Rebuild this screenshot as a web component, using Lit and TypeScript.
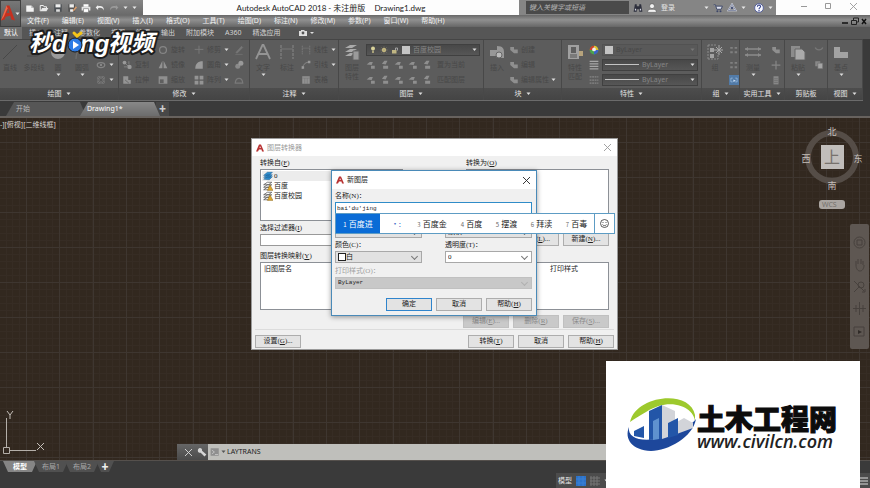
import { LitElement, html, svg, css, nothing } from "lit";
import { customElement, property } from "lit/decorators.js";
import { classMap } from "lit/directives/class-map.js";

/* Icon drawings, all on a 16 x 16 board. */
const icons: Record<string, unknown> = {
  page: svg`<path d="M2 4h8l4 4v6H2z" fill="#f4f4f4"/><path d="M10 4v4h4" fill="#bbb"/>`,
  open: svg`<path d="M2 13V4h5l1 2h4v2" fill="none" stroke="#eee" stroke-width="1.6"/><path d="M2 13l3-5h10l-3 5z" fill="#e8e8e8"/>`,
  save: svg`<path d="M2 2h12v12H2z" fill="#4c5055"/><path d="M4 2h8v5H4z" fill="#f0f0f0"/><path d="M5 10h6v4H5z" fill="#ddd"/>`,
  saveas: svg`<path d="M2 2h11v12H2z" fill="#565656"/><path d="M4 2h7v5H4zM5 10h5v4H5z" fill="#eee"/><path d="M9 12l5-7 2 2-5 6z" fill="#d79a6a"/>`,
  print: svg`<path d="M4 2h8v4H4z" fill="#fff"/><path d="M1 6h14v6H1z" fill="#e4e4e4"/><path d="M4 9h8v6H4z" fill="#fff" stroke="#777"/>`,
  undo: svg`<path d="M5 3L1 7l4 4V8c5-1 8 0 9 4 1-6-4-8-9-7z" fill="#eee"/>`,
  redo: svg`<path d="M11 3l4 4-4 4V8C6 7 3 8 2 12 1 6 6 4 11 5z" fill="#9a9a9a"/>`,
  binoc: svg`<path d="M3 2h3v3h4V2h3l2 12h-5v-4H6v4H1z" fill="#2d2f3c"/><path d="M3 9h2v3H3zM11 9h2v3h-2z" fill="#d5d8e4"/>`,
  user: svg`<circle cx="8" cy="5" r="4" fill="#f2f2f2" stroke="#555"/><path d="M1 15c0-5 3-5 7-5s7 0 7 5z" fill="#f2f2f2" stroke="#555"/>`,
  cart: svg`<path d="M1 3h3l2 7h7l2-5H5" fill="#dfe3f0" stroke="#3c4668" stroke-width="1.5"/><circle cx="7" cy="13" r="1.6" fill="#3c4668"/><circle cx="12" cy="13" r="1.6" fill="#3c4668"/>`,
  tri: svg`<path d="M8 2l6 10H2z" fill="none" stroke="#e8ecf8" stroke-width="2.4"/><path d="M8 2l6 10H2z" fill="none" stroke="#4b5577" stroke-width="1"/><circle cx="8" cy="8" r="2" fill="#4b5577"/>`,
  help: svg`<circle cx="8" cy="8" r="7" fill="#f7f8ff" stroke="#54609a" stroke-width="1.5"/><path d="M5.500 6c0-4 5.500-3 5 0-.3 1.500-2.500 1.500-2.500 4" fill="none" stroke="#35438b" stroke-width="1.8"/><circle cx="8" cy="12.300" r="1.200" fill="#35438b"/>`,
  line: svg`<path d="M1 15L15 1" stroke="#484848" stroke-width="1"/>`,
  pline: svg`<path d="M1 12h9c5 0 5-8 0-8" fill="none" stroke="#4a4a4a"/>`,
  circle: svg`<circle cx="8" cy="8" r="7" fill="#9b9b9b"/>`,
  arc: svg`<path d="M2 15C2 6 7 2 14 2" fill="none" stroke="#6f6f6f" stroke-width="1.200"/>`,
  rect: svg`<path d="M2 4h12v8H2z" fill="none" stroke="#777"/>`,
  ellipse: svg`<ellipse cx="8" cy="8" rx="6" ry="4" fill="none" stroke="#858585" stroke-width="2"/><circle cx="8" cy="8" r="1.500" fill="#999"/>`,
  hatch: svg`<path d="M2 2h12v12H2z" fill="#777"/><path d="M2 2l12 12M14 2L2 14M8 2v12M2 8h12" stroke="#555"/>`,
  move: svg`<path d="M8 1v14M1 8h14" stroke="#858585" stroke-width="2"/>`,
  rotate: svg`<circle cx="8" cy="8" r="5.500" fill="none" stroke="#858585" stroke-width="2"/>`,
  trim: svg`<path d="M1 7h14M8 1v13" stroke="#7a7a7a" stroke-width="1.500"/>`,
  pencil: svg`<path d="M3 12L12 2l2 2L5 13zM2 15h12" fill="#777" stroke="#777"/>`,
  copy: svg`<circle cx="4" cy="4" r="3" fill="#999"/><circle cx="12" cy="11" r="3.500" fill="#999"/><path d="M4 4l8 8M3 11h5M11 2v5" stroke="#999"/>`,
  mirror: svg`<path d="M7 1v12H1zM9 1v12h6z" fill="#929292"/>`,
  fillet: svg`<path d="M2 14C2 6 6 2 14 2v12z" fill="#9a9a9a"/>`,
  blob: svg`<circle cx="6" cy="10" r="4" fill="#8a8a8a"/><circle cx="11" cy="5" r="4" fill="#999"/>`,
  stretch: svg`<path d="M2 2h8v6h4v6H2z" fill="#949494"/><path d="M5 8l6 5" stroke="#555"/>`,
  scale: svg`<path d="M1 2h14v12H1z" fill="#8f8f8f"/><path d="M3 7h6v6H3z" fill="#5f5f5f"/>`,
  array: svg`<path d="M1 1h6v6H1zM9 1h6v6H9zM1 9h6v6H1zM9 9h6v6H9z" fill="#949494"/>`,
  offset: svg`<path d="M2 13C3 3 13 3 14 13z" fill="none" stroke="#7a7a7a" stroke-width="2"/>`,
  bigA: svg`<path d="M1 15L7.500 1h1L15 15M4 10h8" fill="none" stroke="#949494" stroke-width="1.800"/>`,
  dim: svg`<path d="M2 1v14M14 1v14" stroke="#888" stroke-dasharray="3 1"/><path d="M2 5h12" stroke="#777"/>`,
  leader: svg`<path d="M2 14C4 5 8 4 14 3" fill="none" stroke="#888" stroke-width="1.600"/><path d="M1 10h4v4H1zM11 1h4v4h-4z" fill="#999"/>`,
  table: svg`<path d="M2 2h12v12H2z" fill="#929292"/><path d="M2 5h12M6 5v9M10 5v9" stroke="#777"/>`,
  layers: svg`<path d="M1 4l5-3h7l-5 3zM1 8l5-3h7l-5 3zM1 12l5-3h4l-3 3z" fill="#aaa"/><path d="M9 7h6v9H9z" fill="#9a9a9a" stroke="#666"/>`,
  lay1: svg`<path d="M1 7l5-4h5l-2 5zM8 9h6v5H8z" fill="#8f8f8f"/>`,
  lay2: svg`<path d="M3 6l4-5h5l-3 6zM5 9h8v5H5z" fill="#8f8f8f"/>`,
  insert: svg`<path d="M1 6h7V2c6 0 7 3 7 6v6H9v-2H1z" fill="#979797"/><circle cx="10" cy="11" r="3" fill="#bbb" stroke="#666"/>`,
  block: svg`<path d="M2 3h6v4h6v6H8L2 8z" fill="#8f8f8f"/>`,
  match: svg`<path d="M1 1h11v14H1z" fill="#a0a0a0"/><path d="M4 3h5v6H4z" fill="#5f5f5f"/><path d="M3 11h7M3 13h7" stroke="#555"/><path d="M12 7h4v5h-4z" fill="#b6a37c"/>`,
  wheel: svg`<circle cx="8" cy="8" r="7" fill="#4aa34c"/><path d="M8 8V1a7 7 0 0 1 7 7z" fill="#e0c030"/><path d="M8 8H1a7 7 0 0 1 7-7z" fill="#d0402c"/><path d="M8 8v7a7 7 0 0 0 7-7z" fill="#3b62c8"/><circle cx="8" cy="7" r="3" fill="#eee"/>`,
  weights: svg`<path d="M1 2h14M1 6h14M1 10h14M1 14h14" stroke="#a6a6a6" stroke-width="2"/>`,
  types: svg`<path d="M1 3h14M1 8h14M1 13h14" stroke="#858585" stroke-width="2" stroke-dasharray="3 1"/>`,
  group: svg`<path d="M1 1h9M1 15h10V9M1 1v14" stroke="#8b8b8b" fill="none" stroke-dasharray="2 1"/><path d="M3 4h4v4H3zM3 10h4v4H3z" fill="#a2a2a2"/><path d="M12 1v10M7 6h9M9 3l6 6M15 3L9 9" stroke="#a8a8a8"/>`,
  dots: svg`<path d="M2 3h4v3H2zM9 3h4v3H9zM2 10h4v3H2zM9 10h4v3H9z" fill="#808080"/>`,
  sel: svg`<path d="M0 0h16v16H0z" fill="#527ba8"/><path d="M3 5h3M3 5v6h3M13 5h-3M13 5v6h-3" stroke="#a9c8ea" fill="none"/><path d="M7 7l4 2-4 2z" fill="#cfe2f7"/>`,
  measure: svg`<path d="M0 5h16M0 11h16" stroke="#8b8b8b" stroke-width="1.500"/><path d="M0 5l3-2v4zM16 5l-3-2v4zM0 11l3-2v4zM16 11l-3-2v4z" fill="#8b8b8b"/>`,
  calc: svg`<path d="M4 2h8v13H4z" fill="#888"/><path d="M5 6h6M5 9h6M5 12h6" stroke="#666"/>`,
  paste: svg`<path d="M1 2h9v11H1z" fill="#8c8c8c"/><path d="M5 5h7l3 3v8H5z" fill="#aaa" stroke="#666"/>`,
  cut: svg`<path d="M2 4c2 5 10 5 12 0" fill="none" stroke="#777" stroke-width="2"/>`,
  copies: svg`<path d="M2 2h8v8H2z" fill="#888"/><path d="M6 5h8v9H6z" fill="#a5a5a5" stroke="#666"/>`,
  base: svg`<path d="M1 3h6v5h8v6H1z" fill="#a2a2a2"/>`,
  bulb: svg`<circle cx="8" cy="5" r="4" fill="#d9d29a"/><path d="M6 9h4v5H6z" fill="#a9a27a"/>`,
  sun: svg`<circle cx="8" cy="8" r="4" fill="#e0cf88"/><path d="M8 1v14M1 8h14M3 3l10 10M13 3L3 13" stroke="#a8a078"/>`,
  lock: svg`<path d="M2 8h9v7H2z" fill="#c0b683"/><path d="M9 8V4h4v5" stroke="#bbb" fill="none" stroke-width="1.500"/>`,
  wrench: svg`<path d="M2 3c3-3 7 0 6 3l7 6-3 3-6-6C3 10 0 7 2 3l3 3z" fill="#d5d5d5"/>`,
  prompt: svg`<path d="M1 2h13v12H1z" fill="#8f8f8f"/><path d="M3 5l4 3-4 3M8 12h5" stroke="#ddd" fill="none"/>`,
  acad: svg`<path d="M0 15L6 1h4l6 14h-4l-1-4H6l-2 4z" fill="#b83232"/><path d="M7 8l1-4 2 4z" fill="#f7dede"/>`,
  layerBlue: svg`<path d="M1 7l6-5h8l-5 5zM1 10l6-4h8l-5 5zM1 13l6-4h8l-5 5z" fill="#2e8fd0" stroke="#1d5d90" stroke-width=".8"/>`,
  layerWarn: svg`<path d="M1 6l6-4h7l-5 4zM1 10l6-4h7l-5 4zM1 14l6-4h5l-3 4z" fill="#fff" stroke="#333"/><path d="M11 6l5 9H7z" fill="#e0a82c" stroke="#6a4c10" stroke-width=".6"/>`,
};

const icon = (name: string, size = 10) =>
  html`<svg width=${size} height=${size} viewBox="0 0 16 16" aria-hidden="true">${icons[name]}</svg>`;

const caret = html`<svg class="caret" width="5" height="4" viewBox="0 0 5 4" aria-hidden="true"><path d="M.5.500h4L2.500 3z" fill="currentColor"/></svg>`;
const cross = html`<svg width="7" height="7" viewBox="0 0 7 7" aria-hidden="true"><path d="M0 0l7 7M7 0L0 7" stroke="currentColor" stroke-width=".9"/></svg>`;

type Tool = { i: string; t?: string; more?: boolean };

const reset = css`
  * { box-sizing: border-box; }
  button, input, select {
    font: inherit; color: inherit; margin: 0; padding: 0;
    border: 0; border-radius: 0; background: none; appearance: none;
  }
  svg { display: block; flex: none; }
`;

@customElement("ribbon-bar")
class RibbonBar extends LitElement {
  static styles = [reset, css`
    :host { display: block; background: #3a3a3a; padding-right: 7px; }
    .panels {
      display: grid;
      grid-template-columns: 119fr 131fr 89fr 145fr 78fr 140fr 38fr 45fr 43fr 35fr;
      border-top: 1px solid #454545; border-bottom: 1px solid #6b6b6b;
    }
    .panel { display: flex; flex-direction: column; min-width: 0; border-right: 1px solid #484848; background: #5c5c5c; }
    .body { height: 48px; display: flex; gap: 4px; padding: 2px 3px 1px; color: #484848; }
    .name {
      height: 12px; display: flex; align-items: center; justify-content: center; gap: 4px;
      background: linear-gradient(#4d4d4d, #444); color: #e2e2e2; white-space: nowrap;
    }
    .big { display: flex; flex-direction: column; align-items: center; gap: 1px; width: 20px; flex: none; white-space: nowrap; line-height: 9px; }
    .big svg:first-child { margin: 2px 0; }
    .caret { color: #ddd; }
    .col { display: flex; flex-direction: column; flex: none; }
    .row { height: 15px; display: flex; align-items: center; gap: 3px; white-space: nowrap; }
    .row .caret { margin-left: 4px; }
    .end { margin-left: auto; }
    .icons { display: flex; gap: 4px; margin-right: 2px; }
    .draw .body { padding-left: 0; }
    .draw .row .caret { margin-left: 0; }
    .modify .body { gap: 9px; }
    .modify .row .caret { margin-left: 0; }
    .modify .col:last-child { margin-left: -4px; }
    .note .row .caret { margin-left: 0; }
    .block .body { gap: 2px; }
    .block .row { gap: 2px; }
    .block .row .caret { margin-left: 0; }
    .wide { flex: 1; min-width: 0; }
    .combo {
      flex: 1; height: 12px; display: flex; align-items: center; gap: 3px; padding: 0 2px;
      background: linear-gradient(#484848, #565656); border: 1px solid #404040; color: #858585;
    }
    .combo .caret { margin-left: auto; }
    .flat { background: #595959; border-color: #525252; color: #484848; }
    .flat .caret { color: #777; }
    .chip { width: 8px; height: 8px; background: #c4c4c4; }
    .rule { width: 34px; height: 1px; background: #c4c4c4; }
  `];

  big(tool: Tool, size = 16) {
    return html`<button class="big">${icon(tool.i, size)}<span>${tool.t}</span>${tool.more ? caret : nothing}</button>`;
  }

  col(tools: Tool[]) {
    return html`<div class="col">${tools.map((t) => html`
      <button class="row">${icon(t.i)}${t.t ? html`<span>${t.t}</span>` : nothing}${t.more ? caret : nothing}</button>`)}</div>`;
  }

  panel(cls: string, name: string, body: unknown, more = true) {
    return html`<section class="panel ${cls}"><div class="body">${body}</div>
      <div class="name"><span>${name}</span>${more ? caret : nothing}</div></section>`;
  }

  render() {
    return html`<div class="panels">
      ${this.panel("draw", "绘图", html`
        ${this.big({ i: "line", t: "直线" })}${this.big({ i: "pline", t: "多段线" })}
        ${this.big({ i: "circle", t: "圆", more: true })}${this.big({ i: "arc", t: "圆弧", more: true })}
        ${this.col([{ i: "rect", more: true }, { i: "ellipse", more: true }, { i: "hatch", more: true }])}`)}
      ${this.panel("modify", "修改", html`
        ${this.col([{ i: "move", t: "移动" }, { i: "copy", t: "复制" }, { i: "stretch", t: "拉伸" }])}
        ${this.col([{ i: "rotate", t: "旋转" }, { i: "mirror", t: "镜像" }, { i: "scale", t: "缩放" }])}
        ${this.col([{ i: "trim", t: "修剪", more: true }, { i: "fillet", t: "圆角", more: true }, { i: "array", t: "阵列", more: true }])}
        ${this.col([{ i: "pencil" }, { i: "blob" }, { i: "offset" }])}`)}
      ${this.panel("note", "注释", html`
        ${this.big({ i: "bigA", t: "文字", more: true })}${this.big({ i: "dim", t: "标注" })}
        ${this.col([{ i: "dim", t: "线性", more: true }, { i: "leader", t: "引线", more: true }, { i: "table", t: "表格" }])}`)}
      ${this.panel("layer", "图层", html`
        <button class="big">${icon("layers", 16)}<span>图层<br>特性</span></button>
        <div class="col wide">
          <div class="row"><button class="combo">${icon("bulb", 8)}${icon("sun", 8)}${icon("lock", 8)}<span class="chip"></span>百度校园${caret}</button></div>
          ${["置为当前", "匹配图层"].map((t) => html`
            <button class="row"><span class="icons">${["lay1", "lay2", "lay1", "lay1", "lay2"].map((n) => icon(n))}</span><span>${t}</span></button>`)}
        </div>`)}
      ${this.panel("block", "块", html`
        ${this.big({ i: "insert", t: "插入" })}
        ${this.col([{ i: "block", t: "创建" }, { i: "block", t: "编辑" }, { i: "block", t: "编辑属性", more: true }])}`)}
      ${this.panel("props", "特性", html`
        <button class="big">${icon("match", 16)}<span>特性<br>匹配</span></button>
        <div class="col wide">
          <div class="row">${icon("wheel")}<button class="combo flat"><span class="chip"></span>ByLayer${caret}</button></div>
          <div class="row">${icon("weights")}<button class="combo"><span class="rule"></span>ByLayer${caret}</button></div>
          <div class="row">${icon("types")}<button class="combo"><span class="rule"></span>ByLayer${caret}</button></div>
        </div>`)}
      ${this.panel("grp", "组", html`${this.big({ i: "group", t: "组" })}
        <span class="end">${this.col([{ i: "dots" }, { i: "dots" }, { i: "sel" }])}</span>`)}
      ${this.panel("util", "实用工具", html`${this.big({ i: "measure", t: "测量", more: true })}
        <span class="end">${this.col([{ i: "block" }, { i: "move" }, { i: "calc" }])}</span>`)}
      ${this.panel("clip", "剪贴板", html`${this.big({ i: "paste", t: "粘贴", more: true })}
        <span class="end">${this.col([{ i: "cut" }, { i: "copies" }])}</span>`, false)}
      ${this.panel("view", "视图", html`${this.big({ i: "base", t: "基点", more: true })}`)}
    </div>`;
  }
}

@customElement("acad-window")
class AcadWindow extends LitElement {
  @property() heading = "";
  @property({ type: Boolean, reflect: true }) active = false;

  static styles = [reset, css`
    :host { display: flex; flex-direction: column; background: #f0f0f0; border: 1px solid #9a9a9a; }
    :host([active]) { border-color: #4a8ab8; box-shadow: 0 1px 5px rgba(0, 0, 0, 0.4); }
    header { height: 17px; display: flex; align-items: center; gap: 3px; padding: 0 6px 0 4px; background: #fff; color: #999; }
    :host([active]) header { height: 18px; color: #222; }
    button { margin-left: auto; }
  `];

  render() {
    return html`<header>${icon("acad", 8)}<span>${this.heading}</span><button aria-label="关闭">${cross}</button></header><slot></slot>`;
  }
}

@customElement("layer-translator")
class LayerTranslator extends LitElement {
  static styles = [reset, css`
    :host { display: block; font-family: "Liberation Serif", "Noto Sans CJK SC", serif; font-size: 7px; line-height: 10px; color: #222; }
    .back { width: 367px; height: 212px; }
    .content { margin: 2px 3px 0; padding: 0 5px; border-bottom: 1px solid #dcdcdc; }
    .pair { display: flex; justify-content: space-between; }
    .side { width: 143px; display: flex; flex-direction: column; }
    .lab { display: block; height: 11px; white-space: nowrap; }
    .list { height: 52px; margin: 0; padding: 1px; list-style: none; background: #fff; border: 1px solid #8c9096; }
    .list li { display: flex; gap: 1px; align-items: center; height: 10px; padding-left: 1px; }
    .list .on { background: #ececec; }
    .filters { margin-top: 2px; }
    .filters .side + .side { flex-direction: row; align-items: flex-end; justify-content: flex-end; gap: 4px; }
    .edit { width: 100%; height: 12px; background: #fff; border: 1px solid #999; padding: 0 1px; }
    .map { margin-top: 5px; }
    table { width: 100%; height: 48px; background: #fff; border: 1px solid #8c9096; border-spacing: 0; }
    th { font-weight: 400; text-align: left; vertical-align: top; padding: 1px 3px; }
    .last { width: 61px; }
    .buttons { display: flex; justify-content: flex-end; gap: 4px; padding: 5px 0 1px; }
    .btn { width: 46px; height: 13px; background: #e3e3e3; border: 1px solid #adadad; text-align: center; line-height: 11px; white-space: nowrap; }
    .btn:disabled { background: #c9c9c9; border-color: #c0c0c0; color: #8a8a8a; }
    .foot { display: flex; gap: 4px; padding: 5px 3px 0; }
    .foot .btn:first-child { margin-right: auto; }
    .front { position: absolute; left: 80px; top: 32px; width: 206px; height: 146px; }
    .form { padding: 2px 4px 0 3px; display: flex; flex-direction: column; }
    .name { border-color: #2f8cc8; font-family: "Liberation Mono", monospace; font-size: 6px; line-height: 10px; }
    .grid { display: grid; grid-template-columns: 87px 87px; justify-content: space-between; }
    .hidden-row { margin-top: 12px; margin-bottom: 2px; }
    .box { display: grid; grid-template-columns: 1fr 9px; align-items: center; border: 1px solid #a8a8a8; background: #fff; height: 12px; }
    .box select { grid-area: 1 / 1 / 2 / 3; height: 10px; line-height: 10px; padding-left: 2px; min-width: 0; }
    .box::after { content: ""; grid-area: 1 / 2; width: 4px; height: 4px; margin-top: -2px; border: solid #777; border-width: 0 1px 1px 0; transform: rotate(45deg); pointer-events: none; }
    .gray { background: #e1e1e1; }
    .off { background: #c8c8c8; border-color: #c0c0c0; }
    .off::after { border-color: #b0b0b0; }
    .off select { font-family: "Liberation Mono", monospace; font-size: 6px; opacity: 1; }
    .mute { color: #a0a0a0; margin-top: 3px; }
    .swatch { display: grid; grid-template-columns: 9px 1fr 9px; }
    .swatch::before { content: ""; width: 6px; height: 6px; margin-left: 2px; background: #fff; border: 1px solid #222; }
    .swatch select { grid-area: 1 / 2 / 2 / 4; padding-left: 1px; }
    .swatch::after { grid-area: 1 / 3; }
    .confirm { display: flex; justify-content: flex-end; gap: 4px; padding-top: 9px; }
    .ok { outline: 1px solid #2f84cc; outline-offset: -1px; }
    .ime {
      position: absolute; left: 84px; top: 75px; width: 280px; height: 21px; display: flex;
      background: #fff; border: 1px solid #5d9cc4; font-family: "Noto Sans CJK SC", sans-serif; font-size: 8px; line-height: 19px;
    }
    .cand { flex: 0 0 35px; text-align: center; white-space: nowrap; }
    .cand small { font-size: 6px; color: #666; margin-right: 2px; }
    .picked { background: #0a6cd6; color: #fff; flex-basis: 44px; }
    .picked small { color: #fff; }
    .sign { color: #3c68c8; flex-basis: 30px; }
    .three { flex-basis: 44px; }
    .face { flex: 1; border-left: 1px solid #5d9cc4; display: grid; place-items: center; }
  `];

  render() {
    return html`
      <acad-window class="back" heading="图层转换器">
        <div class="content">
          <div class="pair">
            <div class="side"><span class="lab" id="from">转换自(<u>F</u>)</span>
              <ul class="list" aria-labelledby="from">
                <li class="on">${icon("layerBlue")}0</li><li>${icon("layerWarn")}百度</li><li>${icon("layerWarn")}百度校园</li>
              </ul></div>
            <div class="side"><span class="lab" id="to">转换为(<u>O</u>)</span><ul class="list" aria-labelledby="to"></ul></div>
          </div>
          <div class="pair filters">
            <div class="side"><label class="lab" for="filter">选择过滤器(<u>I</u>)</label><input class="edit" id="filter"></div>
            <div class="side"><button class="btn">加载(<u>L</u>)...</button><button class="btn">新建(<u>N</u>)...</button></div>
          </div>
          <div class="map"><span class="lab">图层转换映射(<u>Y</u>)</span>
            <table><tr><th>旧图层名</th><th class="last">打印样式</th></tr></table></div>
          <div class="buttons">
            <button class="btn" disabled>编辑(<u>E</u>)...</button><button class="btn" disabled>删除(<u>R</u>)</button><button class="btn" disabled>保存(<u>S</u>)...</button>
          </div>
        </div>
        <div class="foot">
          <button class="btn">设置(<u>G</u>)...</button><button class="btn">转换(<u>T</u>)</button><button class="btn">取消</button><button class="btn">帮助(<u>H</u>)</button>
        </div>
      </acad-window>
      <acad-window class="front" heading="新图层" active>
        <div class="form">
          <label class="lab" for="name">名称(N)：</label>
          <input class="edit name" id="name" value="bai'du'jing">
          <div class="grid hidden-row">
            <div class="box gray"><select aria-label="线型"><option>Continuous</option></select></div>
            <div class="box gray"><select aria-label="线宽"><option>默认</option></select></div>
          </div>
          <div class="grid">
            <label class="lab" for="color">颜色(C)：</label><label class="lab" for="clear">透明度(T)：</label>
            <div class="box gray swatch"><select id="color"><option>白</option></select></div>
            <div class="box"><select id="clear"><option>0</option></select></div>
          </div>
          <label class="lab mute" for="style">打印样式(O)：</label>
          <div class="box off"><select id="style" disabled><option>ByLayer</option></select></div>
          <div class="confirm"><button class="btn ok">确定</button><button class="btn">取消</button><button class="btn">帮助(<u>H</u>)</button></div>
        </div>
      </acad-window>
      <div class="ime">
        ${[["1", "百度进"], ["", "·:"], ["3", "百度金"], ["4", "百度"], ["5", "摆渡"], ["6", "拜渎"], ["7", "百毒"]].map(([n, t]) => html`
          <span class=${classMap({ cand: true, picked: n === "1", sign: n === "", three: n === "3" })}><small>${n}</small>${t}</span>`)}
        <button class="face" aria-label="表情"><svg width="9" height="9" viewBox="0 0 9 9"><circle cx="4.500" cy="4.500" r="4" fill="none" stroke="#333" stroke-width=".8"/><path d="M3 3v1M6 3v1M2.500 5.500c1 1.500 3 1.500 4 0" fill="none" stroke="#333" stroke-width=".8"/></svg></button>
      </div>`;
  }
}

@customElement("app-root")
class AppRoot extends LitElement {
  static styles = [reset, css`
    :host {
      position: relative; display: flex; flex-direction: column; min-height: 100vh; overflow: hidden;
      font-family: "Noto Sans", "Noto Sans CJK SC", sans-serif; font-size: 7px; line-height: 10px; color: #e4e4e4; background: #3a3a3a;
    }
    .top { display: grid; grid-template-columns: 21px 1fr; }
    .logo { background: linear-gradient(#777, #585858); border: 1px solid #404040; display: flex; align-items: center; }
    .title { height: 15px; display: flex; background: #fdfdfd; }
    .quick { width: 122px; display: flex; align-items: center; gap: 4px; padding: 0 4px; background: linear-gradient(#858585, #6a6a6a); }
    .caret { color: #e8e8e8; }
    .caption { flex: 1; display: flex; justify-content: center; align-items: center; gap: 9px; color: #222; font-family: Lato, "Noto Sans CJK SC", sans-serif; font-size: 8px; white-space: nowrap; }
    .search { width: 257px; display: flex; align-items: center; gap: 4px; background: #858585; padding-right: 3px; }
    .search input { width: 103px; height: 13px; background: #4a4a4a; padding-left: 3px; font-style: italic; margin-left: 7px; }
    .search input::placeholder { color: #b5b5b5; opacity: 1; }
    .push { margin-left: auto; }
    .win { width: 94px; display: flex; align-items: center; justify-content: space-around; color: #999; padding: 0 4px 3px 16px; }
    .menu { height: 12px; display: flex; align-items: center; gap: 13px; padding-left: 6px; background: linear-gradient(#686868, #909090 40%, #666); color: #f2f2f2; }
    .menu button { white-space: nowrap; }
    .mdi { margin-left: auto; padding-right: 3px; }
    .tabs { height: 12px; display: flex; align-items: center; background: #565656; color: #d2d2d2; }
    .tabs button { height: 12px; padding: 0 4px; margin-right: 3px; white-space: nowrap; }
    .tabs .on { background: #6f6f6f; color: #fff; }
    .docs { height: 15px; display: flex; align-items: flex-end; padding-left: 6px; }
    .docs button { height: 14px; }
    .doc { width: 80px; background: #565656; clip-path: polygon(0 100%, 8px 0, calc(100% - 6px) 0, 100% 100%); text-align: left; padding-left: 10px; color: #bcbcbc; margin-right: -6px; }
    .doc.on { background: linear-gradient(#888, #6c6c6c); color: #fff; padding-left: 7px; }
    .plus { width: 13px; margin-left: 2px; background: #484848; color: #ccc; }
    .space {
      flex: 1 0 343px; position: relative; border-top: 2px solid #67625e; background-color: #32281f;
      background-image:
        linear-gradient(90deg, #3e3630 1px, transparent 1px), linear-gradient(90deg, #3e3630 1px, transparent 1px), linear-gradient(90deg, #3e3630 1px, transparent 1px),
        linear-gradient(#3e3630 1px, transparent 1px),
        linear-gradient(90deg, #362c24 1px, transparent 1px), linear-gradient(90deg, #362c24 1px, transparent 1px), linear-gradient(90deg, #362c24 1px, transparent 1px),
        linear-gradient(#362c24 1px, transparent 1px);
      background-size: 100px 35px, 100px 35px, 100px 35px, 35px 35px, 20px 7px, 20px 7px, 20px 7px, 7px 7px;
      background-position: 26px 0, 59px 0, 93px 0, 0 24px, 6px 0, 12px 0, 19px 0, 0 3px;
    }
    .vp { margin: 2px 0 0; white-space: nowrap; color: #d8d4d0; }
    .cube { position: absolute; right: 6px; top: 6px; }
    .nav { position: absolute; right: 1px; top: 106px; width: 19px; height: 125px; background: #5e5752; border-radius: 2px; display: flex; flex-direction: column; align-items: center; justify-content: space-around; padding: 8px 0; }
    .ucs { position: absolute; left: 2px; bottom: 4px; }
    .dialogs { position: absolute; left: 251px; top: 20px; }
    .cmd { position: absolute; left: 177px; right: 220px; bottom: 0; height: 16px; display: flex; }
    .grip { width: 31px; background: linear-gradient(#666, #4a4a4a); display: flex; align-items: center; justify-content: space-between; padding: 0 1px 0 8px; color: #ddd; }
    .cmd label { flex: 1; display: flex; align-items: center; gap: 1px; padding-left: 2px; background: #bfbfbb; color: #222; }
    .cmd input { flex: 1; }
    .cmd .caret { color: #555; }
    .bottom { height: 28px; display: flex; justify-content: space-between; border-top: 1px solid #55504c; }
    .sheets { display: flex; height: 11px; padding-left: 3px; }
    .sheets button { width: 34px; margin-right: -3px; background: #505050; color: #a8a8a8; clip-path: polygon(0 0, 100% 0, calc(100% - 5px) 100%, 5px 100%); }
    .sheets .on { background: #858585; color: #fff; font-weight: 700; }
    .sheets .add { width: 18px; color: #eee; }
    .status { align-self: flex-end; width: 314px; height: 15px; display: flex; align-items: center; gap: 4px; background: #4c4c4c; padding: 0 2px; }
    .card { position: absolute; right: 10px; bottom: 0; width: 254px; height: 127px; background: #fff; }
    .mark { position: absolute; left: 24px; top: 26px; }
    .stamp { font-family: "Noto Sans CJK SC", sans-serif; font-weight: 700; font-style: italic; font-size: 23px; fill: #fff; stroke: #1d1d1d; stroke-width: 4px; paint-order: stroke; stroke-linejoin: round; }
    .latin { font-family: "Liberation Sans", sans-serif; font-size: 24px; }
    .zh { font-family: "Noto Sans CJK SC", sans-serif; font-weight: 900; font-size: 28px; fill: #0c0c0c; stroke: #0c0c0c; stroke-width: 1px; }
    .url { font-family: "Open Sans", sans-serif; font-weight: 600; font-style: italic; font-size: 18px; fill: #222; }
    .dir { font-family: "Noto Sans CJK SC", sans-serif; font-size: 9px; fill: #c4bfb9; text-anchor: middle; }
    .top-face { font-family: "Noto Sans CJK SC", sans-serif; font-size: 16px; fill: #77726d; text-anchor: middle; }
    .wcs { font-size: 7px; fill: #75706b; }
  `];

  render() {
    const menus = ["文件(F)", "编辑(E)", "视图(V)", "插入(I)", "格式(O)", "工具(T)", "绘图(D)", "标注(N)", "修改(M)", "参数(P)", "窗口(W)", "帮助(H)"];
    const tabs = ["默认", "插入", "注释", "参数化", "视图", "管理", "输出", "附加模块", "A360", "精选应用"];
    return html`
      <div class="top">
        <button class="logo" aria-label="应用程序">
          <svg width="14" height="19" viewBox="0 0 15 19"><path d="M0 17L6 1h3l6 16-4-1-1-4-5 1-1 3z" fill="#c5301f"/><path d="M6 9l2-5 1 5z" fill="#6d5a56"/><path d="M0 17L6 1l1 3-4 9z" fill="#ec6a4c"/></svg>${caret}
        </button>
        <div>
          <div class="title">
            <div class="quick">${["page", "open", "save", "saveas", "print", "undo", "redo"].map((n) => icon(n))}${caret}${caret}</div>
            <div class="caption"><span>Autodesk AutoCAD 2018 - 未注册版</span><span>Drawing1.dwg</span></div>
            <div class="search">
              <input placeholder="键入关键字或短语" aria-label="键入关键字或短语">
              ${icon("binoc")}${icon("user")}<span>登录</span><span class="push"></span>${caret}${icon("cart")}${icon("tri")}${caret}<span></span>${icon("help")}${caret}
            </div>
            <div class="win">
              <svg width="6" height="6" viewBox="0 0 6 6"><path d="M0 3.500h6" stroke="#999"/></svg>
              <svg width="6" height="6" viewBox="0 0 6 6"><path d="M.5.5h5v5h-5z" fill="none" stroke="#999"/></svg>${cross}
            </div>
          </div>
          <nav class="menu">${menus.map((m) => html`<button>${m}</button>`)}
            <span class="mdi"><svg width="25" height="8" viewBox="0 0 25 8"><path d="M0 6h6" stroke="#111" stroke-width="1.500"/><path d="M9.500 3.500h5v4h-5zM11.500 3V1h5v4h-2" fill="none" stroke="#222"/><path d="M20 2l4 5M24 2l-4 5" stroke="#111" stroke-width="1.500"/></svg></span>
          </nav>
        </div>
      </div>
      <nav class="tabs">${tabs.map((t, i) => html`<button class=${classMap({ on: i === 0 })}>${t}</button>`)}
        <svg width="26" height="6" viewBox="0 0 26 6"><path d="M13 0h3l1 1h2v5h-8V1h2z" fill="#ddd"/><circle cx="15" cy="3" r="1.400" fill="#555"/><path d="M22 2h4l-2 2z" fill="#ddd"/></svg>
      </nav>
      <ribbon-bar></ribbon-bar>
      <nav class="docs"><button class="doc">开始</button><button class="doc on">Drawing1*</button><button class="plus">✚</button></nav>
      <main class="space">
        <p class="vp">-][俯视][二维线框]</p>
        <svg class="cube" width="64" height="90" viewBox="0 0 64 90">
          <circle cx="32" cy="33" r="24" fill="none" stroke="#554d47" stroke-width="6"/>
          <path d="M21 21h23v24H21z" fill="#c0bdba"/>
          <text class="top-face" x="32" y="39">上</text>
          <text class="dir" x="32" y="11">北</text><text class="dir" x="32" y="65">南</text>
          <text class="dir" x="6" y="38">西</text><text class="dir" x="58" y="38">东</text>
          <rect x="19" y="76" width="26" height="9" rx="3" fill="#aaa5a1"/><text class="wcs" x="22" y="83">WCS</text>
        </svg>
        <div class="nav">
          <svg width="13" height="13" viewBox="0 0 13 13"><circle cx="6.500" cy="6.500" r="5.500" fill="none" stroke="#47413d"/><path d="M4 4h5v5H4z" fill="none" stroke="#47413d"/></svg>
          <svg width="13" height="14" viewBox="0 0 13 14"><path d="M3 7V3M5 6V1M8 6V1M10 7V3M3 7c0 8 8 8 8 0" fill="none" stroke="#47413d"/></svg>
          <svg width="13" height="13" viewBox="0 0 13 13"><circle cx="8" cy="5" r="3" fill="none" stroke="#47413d"/><path d="M1 1l10 10M1 12l5-5M9 12h3V9" stroke="#47413d" fill="none"/></svg>
          <svg width="13" height="13" viewBox="0 0 13 13"><path d="M6.500 0v13M0 6.500h13M3 3v7M10 3v7" stroke="#47413d"/></svg>
          <svg width="13" height="13" viewBox="0 0 13 13"><path d="M1 3h10v9H1z" fill="none" stroke="#47413d"/><path d="M5 6l4 2-4 2z" fill="#302b28"/></svg>
        </div>
        <svg class="ucs" width="44" height="46" viewBox="0 0 44 46">
          <path d="M4.500 8v30M7 40.500h27M1.500 37.500h6v6h-6z" fill="none" stroke="#b4afa9"/>
          <path d="M5 1l3 4 3-4M8 5v4M35 33l7 7M42 33l-7 7" fill="none" stroke="#c4bfb9"/>
        </svg>
        <div class="cmd">
          <div class="grip">${cross}${icon("wrench")}</div>
          <label>${icon("prompt")}${caret}<input value="LAYTRANS" aria-label="命令"></label>
        </div>
        <layer-translator class="dialogs"></layer-translator>
      </main>
      <footer class="bottom">
        <nav class="sheets"><button class="on">模型</button><button>布局1</button><button>布局2</button><button class="add">✚</button></nav>
        <div class="status"><button>模型</button>
          <svg width="10" height="10" viewBox="0 0 10 10"><path d="M0 0h10v10H0z" fill="#2c72c8"/><path d="M3 0v10M7 0v10M0 3h10M0 7h10" stroke="#3a80d4"/></svg>
          <svg width="10" height="10" viewBox="0 0 10 10"><path d="M1 0v10M4 0v10M7 0v10M0 2h10M0 5h10M0 8h10" stroke="#777"/></svg>${caret}
          <svg class="push" width="8" height="8" viewBox="0 0 8 8"><path d="M0 1h8M0 4h8M0 7h8" stroke="#ddd"/></svg>
        </div>
      </footer>
      <svg class="mark" width="140" height="36" viewBox="0 0 140 36">
        <g class="stamp"><text x="5" y="25">秒</text><text x="84" y="25">视频</text>
          <text class="latin" x="28" y="26">d</text><text class="latin" x="56" y="26">ng</text></g>
        <circle cx="51" cy="19" r="7" fill="#2c7be6" stroke="#1d1d1d"/><path d="M49 15l6 4-6 4z" fill="#fff"/>
        <path d="M50 7l3 3 4-3" fill="none" stroke="#f5c518" stroke-width="3" stroke-linecap="round"/>
      </svg>
      <svg class="card" viewBox="0 0 254 127">
        <path d="M24 61C30 34 84 28 89 54L89 63C91 48 66 34 40 51Q28 58 24 61z" fill="#9dc92d"/>
        <path d="M23 66C21 78 38 82 58 76C72 72 86 64 90 58C87 76 62 90 45 90C26 89 18 78 23 66z" fill="#1d479b"/>
        <path d="M56 44l13 6v12l9-5 9 5v5L68 74 56 78z" fill="#d2d4d9"/>
        <path d="M43 50l13-6v34l-13 1z" fill="#2356a8"/><path d="M47 60l6-3v21l-6 1z" fill="#5f92cf"/>
        <path d="M28 70l10-5V77l-10-2zM62 62l10-5v17l-10 3z" fill="#2356a8"/>
        <text class="zh" x="91" y="69">土木工程网</text>
        <text class="url" x="91" y="87">www.civilcn.com</text>
      </svg>`;
  }
}
